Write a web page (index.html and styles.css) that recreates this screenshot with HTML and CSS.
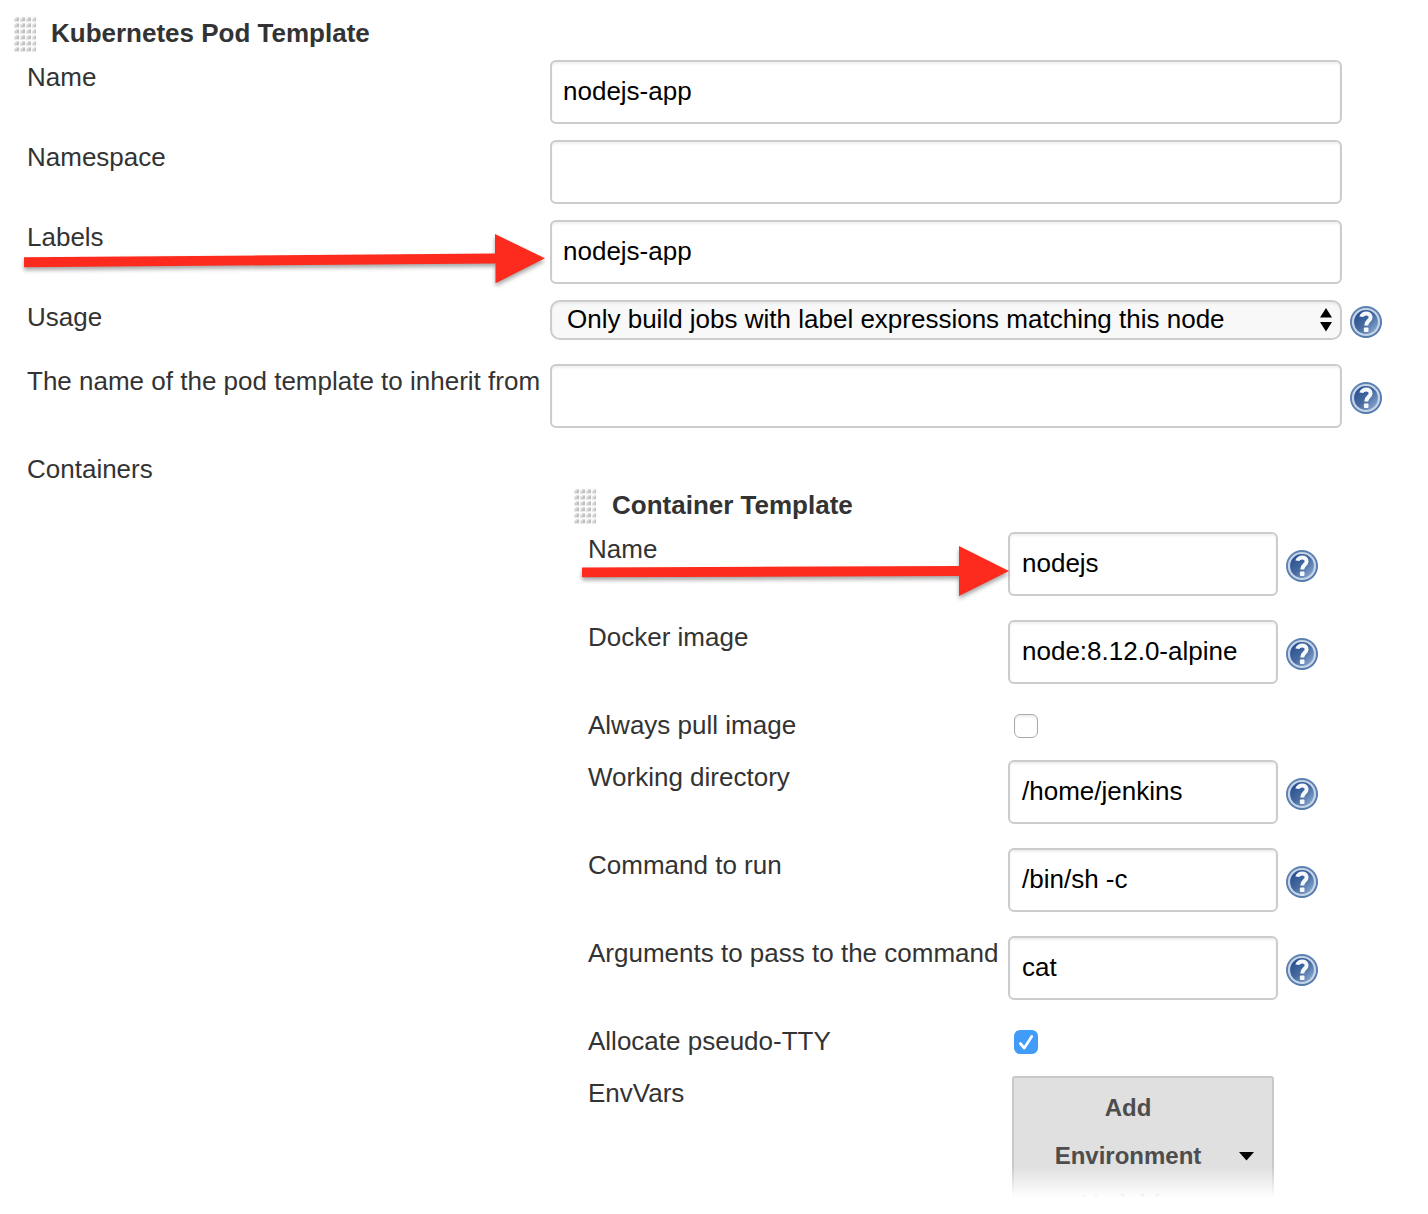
FILE: index.html
```html
<!DOCTYPE html>
<html lang="en">
<head>
<meta charset="utf-8">
<title>Kubernetes Pod Template</title>
<link rel="stylesheet" href="styles.css">
</head>
<body>
<svg class="defs" width="0" height="0" aria-hidden="true">
  <defs>
    <linearGradient id="disc" x1="0" y1="0" x2="1" y2="1">
      <stop offset="0.15" stop-color="#2a5191"/><stop offset="0.5" stop-color="#46699f"/><stop offset="0.9" stop-color="#8dadd3"/>
    </linearGradient>
    <linearGradient id="rim" x1="0" y1="0" x2="1" y2="1">
      <stop offset="0" stop-color="#6084b5"/><stop offset="1" stop-color="#5277ab"/>
    </linearGradient>
    <symbol id="help" viewBox="0 0 32 32">
      <circle cx="16" cy="16" r="16" fill="url(#rim)"/>
      <circle cx="16" cy="16" r="13" fill="url(#disc)" stroke="#c6d4e7" stroke-width="2.2"/>
      <path d="M11.4 10.8C12 6.600 20.600 6 20.600 11.200C20.600 15 16.200 14.600 16.200 19.600" fill="none" stroke="#f6f9fc" stroke-width="4"/>
      <rect x="13.900" y="21.400" width="4.600" height="4.600" rx="1" fill="#f6f9fc"/>
    </symbol>
    <pattern id="dots" width="6" height="6" patternUnits="userSpaceOnUse">
      <rect width="6" height="6" fill="#fbfbfb"/>
      <rect y="2" width="5" height="4" fill="#e9e9e9"/>
      <rect x="2" y="1" width="3" height="2" fill="#dedede"/>
      <rect x="1" y="3" width="4" height="2" fill="#cfcfcf"/>
      <rect x="3" y="2" width="2" height="3" fill="#c0c0c0"/>
    </pattern>
    <symbol id="grip" viewBox="0 0 22 36"><rect width="22" height="36" fill="url(#dots)"/></symbol>
  </defs>
</svg>
<main class="form">
  <header class="heading"><svg class="grip"><use href="#grip"/></svg><h1 class="title">Kubernetes Pod Template</h1></header>
  <div class="row r80"><span class="label">Name</span><div class="field">nodejs-app</div></div>
  <div class="row r80"><span class="label">Namespace</span><div class="field"></div></div>
  <div class="row r80"><span class="label">Labels</span><div class="field">nodejs-app</div></div>
  <div class="row r64"><span class="label">Usage</span>
    <div class="select"><span>Only build jobs with label expressions matching this node</span><svg class="updown" viewBox="0 0 12 24"><path d="M0 9.5L6 0L12 9.5ZM0 14L6 23.5L12 14Z"/></svg></div>
    <svg class="help help-select"><use href="#help"/></svg></div>
  <div class="row r84"><span class="label">The name of the pod template to inherit from</span><div class="field"></div><svg class="help"><use href="#help"/></svg></div>
  <div class="row"><span class="label containers">Containers</span>
    <section class="nested">
      <header class="heading nested-heading"><svg class="grip"><use href="#grip"/></svg><h2 class="title">Container Template</h2></header>
      <div class="row r88"><span class="label">Name</span><div class="field">nodejs</div><svg class="help"><use href="#help"/></svg></div>
      <div class="row r88"><span class="label">Docker image</span><div class="field">node:8.12.0-alpine</div><svg class="help"><use href="#help"/></svg></div>
      <div class="row r52"><span class="label">Always pull image</span><span class="check"></span></div>
      <div class="row r88"><span class="label">Working directory</span><div class="field">/home/jenkins</div><svg class="help"><use href="#help"/></svg></div>
      <div class="row r88"><span class="label">Command to run</span><div class="field">/bin/sh -c</div><svg class="help"><use href="#help"/></svg></div>
      <div class="row r88"><span class="label">Arguments to pass to the command</span><div class="field">cat</div><svg class="help"><use href="#help"/></svg></div>
      <div class="row r52"><span class="label">Allocate pseudo-TTY</span><span class="check checked"><svg viewBox="0 0 24 24"><path d="M6.300 13.500L10.300 18L17.700 6.500"/></svg></span></div>
      <div class="row"><span class="label">EnvVars</span>
        <div class="add"><span class="add-text">Add Environment Variable</span><svg class="caret" viewBox="0 0 15 9"><path d="M0 0H15L7.5 8.5Z"/></svg></div></div>
    </section>
  </div>
  <div class="fade"></div>
  <svg class="arrows" viewBox="0 0 1428 1214" aria-hidden="true">
    <path d="M24 257.3L495 253.6V234L545 258.3L495.500 283.300V263.400L24 267.300Z"/>
    <path d="M582 567.500L959 566V546L1009 571L959 596V576L582 577.300Z"/>
  </svg>
</main>
</body>
</html>
```
FILE: styles.css
```css
* { box-sizing: border-box; }
body { margin: 0; background: #fff; color: #333; font: 26px/34px "Liberation Sans", Arial, sans-serif; }
.defs { position: absolute; }
.form { position: relative; width: 1428px; height: 1214px; overflow: hidden; padding: 12px 0 0 14px; }
.heading { display: flex; height: 48px; gap: 15px; }
.grip { width: 22px; height: 36px; margin-top: 4px; flex: none; }
.title { margin: 4px 0 0; font-size: 26px; line-height: 34px; font-weight: bold; white-space: nowrap; }
.row { display: grid; grid-template-columns: 523px 792px 32px; column-gap: 0; margin-left: 13px; align-items: start; }
.r80 { height: 80px; }
.r64 { height: 64px; }
.r84 { height: 84px; }
.r88 { height: 88px; }
.r52 { height: 52px; }
.label { white-space: nowrap; }
.field { height: 64px; padding: 0 11px; border: 2px solid #ccc; border-radius: 6px; line-height: 58px; color: #000; background: #fff; box-shadow: inset 0 2px 2px #f0f0f0; white-space: nowrap; }
.nested .field { padding-left: 12px; }
.help { width: 32px; height: 32px; margin: 18px 0 0 8px; }
.help-select { margin-top: 6px; }
.select { display: flex; justify-content: space-between; height: 40px; border: 2px solid #ccc; border-radius: 10px; padding: 0 8px 0 15px; background: #f8f8f8; box-shadow: inset 0 2px 2px #ebebeb; color: #000; line-height: 35px; white-space: nowrap; }
.updown { width: 12px; height: 24px; margin-top: 6px; }
.containers { padding-top: 4px; }
.nested { padding-top: 36px; margin-left: 24px; }
.nested-heading { gap: 16px; }
.nested .row { grid-template-columns: 420px 270px 32px; margin-left: 14px; }
.check { display: block; width: 24px; height: 24px; margin: 6px 0 0 6px; border: 1px solid #aaa; border-radius: 6px; box-shadow: inset 0 2px 2px #eee; }
.checked { border: 0; background: #419bf9; box-shadow: none; }
.checked svg { display: block; }
.checked path { fill: none; stroke: #fff; stroke-width: 2.7; stroke-linecap: round; stroke-linejoin: round; }
.add { display: flex; align-items: center; width: 262px; height: 160px; margin-left: 4px; padding: 0 18px 0 30px; border: 2px solid #c8c8c8; border-radius: 3px; background: #e0e0e0; color: #4d4d4d; font-size: 24px; font-weight: bold; line-height: 48px; text-align: center; }
.add-text { width: 170px; margin-right: 27px; }
.caret { width: 15px; height: 9px; flex: none; fill: #000; }
.fade { position: absolute; left: 0; right: 0; top: 1166px; height: 48px; background: linear-gradient(rgba(255,255,255,0), rgba(255,255,255,.95) 30px, #fff 31px); }
.arrows { position: absolute; left: 0; top: 0; width: 1428px; height: 1214px; fill: #fd2b1d; filter: drop-shadow(0 3px 2px rgba(0,0,0,.35)); }
```
